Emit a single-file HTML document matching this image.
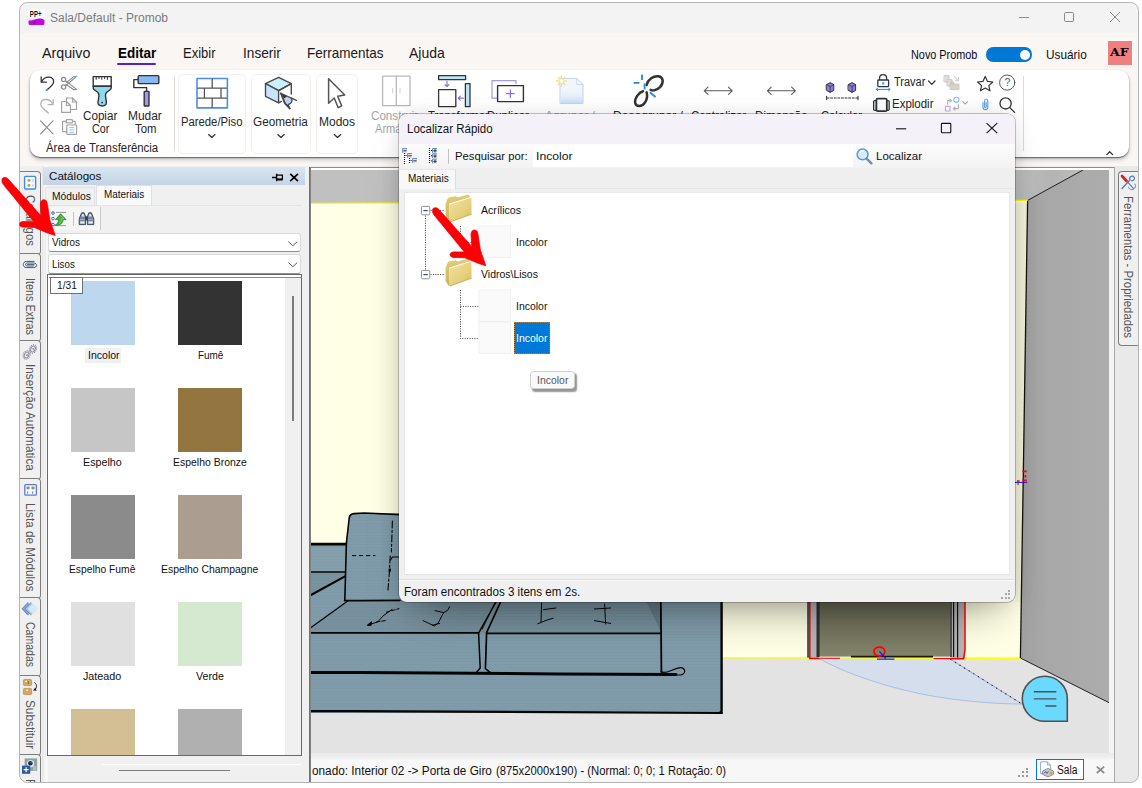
<!DOCTYPE html>
<html lang="pt-BR">
<head>
<meta charset="utf-8">
<title>Sala/Default - Promob</title>
<style>
html,body{margin:0;padding:0;background:#fff;}
body{width:1142px;height:788px;position:relative;overflow:hidden;font-family:"Liberation Sans",sans-serif;color:#000;}
.a{position:absolute;}
.t{position:absolute;white-space:nowrap;line-height:1;}
#win{left:0;top:0;width:1142px;height:788px;clip-path:inset(2.5px 3.5px 5.5px 19.5px round 8px);}
#winb{left:19px;top:2px;width:1120px;height:781px;border:1px solid #b4b4b4;border-radius:8.5px;box-sizing:border-box;pointer-events:none;}
</style>
</head>
<body>
<div id="win" class="a">
<div class="a" style="left:19px;top:2px;width:1120px;height:31px;background:#f3f3f3"></div>
<svg class="a" style="left:28px;top:9px" width="17" height="17" viewBox="0 0 17 17">
<rect x="0" y="0" width="17" height="17" rx="2" fill="#fff"/>
<path d="M0.5 11.5 Q4 11.5 6.5 10.5 Q10 9 13 9.5 Q15.5 10 16.5 11 V14.5 Q16.5 16 15 16 H2 Q0.5 16 0.5 14.5 Z" fill="#c20ae0"/>
<path d="M4.5 13.5 L8 11 L7.5 15.5 Z" fill="#8a069e" opacity=".7"/>
<text x="1.8" y="8" font-family="Liberation Sans, sans-serif" font-weight="700" font-size="8.4" textLength="11.8" lengthAdjust="spacingAndGlyphs" fill="#111">PP+</text>
</svg>
<span class="t" style="left:50.00px;top:12.00px;font-size:12.5px;transform-origin:0 0;transform:scaleX(0.9595);color:#7b7b7b;">Sala/Default - Promob</span>
<svg class="a" style="left:1010px;top:5px" width="120" height="26" viewBox="0 0 120 26" fill="none" stroke="#8a8a8a" stroke-width="1">
<path d="M9 12.5 H19"/>
<rect x="54.5" y="7.5" width="9" height="9" rx="1.3"/>
<path d="M100 7 L110 17 M110 7 L100 17"/>
</svg>
<div class="a" style="left:19px;top:33px;width:1120px;height:133px;background:#f9f6f3"></div>
<span class="t" style="left:42.30px;top:46.00px;font-size:14.5px;transform-origin:0 0;transform:scaleX(0.9824);color:#1a1a1a;">Arquivo</span>
<span class="t" style="left:117.60px;top:46.00px;font-size:14.5px;transform-origin:0 0;transform:scaleX(0.9296);font-weight:700;color:#000;">Editar</span>
<div class="a" style="left:117px;top:63px;width:39px;height:2px;background:#4a22d8;border-radius:1px"></div>
<span class="t" style="left:183.00px;top:46.00px;font-size:14.5px;transform-origin:0 0;transform:scaleX(0.8991);color:#1a1a1a;">Exibir</span>
<span class="t" style="left:242.60px;top:46.00px;font-size:14.5px;transform-origin:0 0;transform:scaleX(0.9408);color:#1a1a1a;">Inserir</span>
<span class="t" style="left:306.60px;top:46.00px;font-size:14.5px;transform-origin:0 0;transform:scaleX(0.9295);color:#1a1a1a;">Ferramentas</span>
<span class="t" style="left:409.20px;top:46.00px;font-size:14.5px;transform-origin:0 0;transform:scaleX(0.9653);color:#1a1a1a;">Ajuda</span>
<span class="t" style="left:910.60px;top:49.00px;font-size:12px;transform-origin:0 0;transform:scaleX(0.9051);color:#0a0a2a;">Novo Promob</span>
<div class="a" style="left:985.5px;top:47.3px;width:46px;height:14.4px;border-radius:7.2px;background:#0078d7"></div>
<div class="a" style="left:1019.5px;top:49.6px;width:10px;height:10px;border-radius:5px;background:#fff"></div>
<span class="t" style="left:1045.80px;top:48.00px;font-size:13px;transform-origin:0 0;transform:scaleX(0.9086);color:#111;">Usuário</span>
<div class="a" style="left:1108px;top:41px;width:24px;height:24px;background:#f08080;box-shadow:0 0 0 1px #fffdfb"></div>
<span class="t" style="left:1110.40px;top:47.00px;font-size:11px;transform-origin:0 0;transform:scaleX(1.1380);font-weight:700;font-family:'DejaVu Serif',serif;color:#000;">AF</span>
<div class="a" style="left:29.5px;top:69.5px;width:1099.2px;height:87.3px;background:#fff;border-radius:10px;box-shadow:0 1px 1.5px rgba(0,0,0,.55),0 3px 4px rgba(0,0,0,.18)"></div>
<div class="a" style="left:178px;top:73.5px;width:67.75px;height:80px;border:1px solid #f4efec;border-radius:5px;box-sizing:border-box"></div>
<div class="a" style="left:250.5px;top:73.5px;width:60.25px;height:80px;border:1px solid #f4efec;border-radius:5px;box-sizing:border-box"></div>
<div class="a" style="left:315.75px;top:73.5px;width:42.25px;height:80px;border:1px solid #f4efec;border-radius:5px;box-sizing:border-box"></div>
<div class="a" style="left:173.5px;top:76px;width:1px;height:75px;background:#e3d8d3"></div>
<div class="a" style="left:1023px;top:76px;width:1px;height:75px;background:#e3d8d3"></div>
<span class="t" style="left:83.20px;top:110.00px;font-size:12px;transform-origin:0 0;transform:scaleX(0.9703);color:#262626;">Copiar</span>
<span class="t" style="left:92.20px;top:123.00px;font-size:12px;transform-origin:0 0;transform:scaleX(0.8947);color:#262626;">Cor</span>
<span class="t" style="left:128.20px;top:110.00px;font-size:12px;transform-origin:0 0;transform:scaleX(0.9937);color:#262626;">Mudar</span>
<span class="t" style="left:134.60px;top:123.00px;font-size:12px;transform-origin:0 0;transform:scaleX(0.9440);color:#262626;">Tom</span>
<span class="t" style="left:45.80px;top:142.00px;font-size:12px;transform-origin:0 0;transform:scaleX(0.9503);color:#262626;">Área de Transferência</span>
<span class="t" style="left:181.00px;top:116.00px;font-size:12.5px;transform-origin:0 0;transform:scaleX(0.9031);color:#262626;">Parede/Piso</span>
<span class="t" style="left:253.20px;top:116.00px;font-size:12.5px;transform-origin:0 0;transform:scaleX(0.9391);color:#262626;">Geometria</span>
<span class="t" style="left:319.00px;top:116.00px;font-size:12.5px;transform-origin:0 0;transform:scaleX(0.9595);color:#262626;">Modos</span>
<span class="t" style="left:370.80px;top:110.00px;font-size:12px;transform-origin:0 0;transform:scaleX(0.9696);color:#a6a6a6;">Construir</span>
<span class="t" style="left:375.20px;top:123.00px;font-size:12px;transform-origin:0 0;transform:scaleX(0.9237);color:#a6a6a6;">Armário</span>
<span class="t" style="left:428.00px;top:110.00px;font-size:12px;transform-origin:0 0;transform:scaleX(0.9399);color:#262626;">Transformar</span>
<span class="t" style="left:487.20px;top:110.00px;font-size:12px;transform-origin:0 0;transform:scaleX(0.9497);color:#262626;">Duplicar</span>
<span class="t" style="left:545.00px;top:110.00px;font-size:12px;transform-origin:0 0;transform:scaleX(1.0130);color:#a6a6a6;">Agrupar /</span>
<span class="t" style="left:612.60px;top:110.00px;font-size:12px;transform-origin:0 0;transform:scaleX(1.0076);color:#262626;">Desagrupar /</span>
<span class="t" style="left:691.00px;top:110.00px;font-size:12px;transform-origin:0 0;transform:scaleX(0.9479);color:#262626;">Centralizar</span>
<span class="t" style="left:754.60px;top:110.00px;font-size:12px;transform-origin:0 0;transform:scaleX(0.9699);color:#262626;">Dimensão</span>
<span class="t" style="left:821.00px;top:110.00px;font-size:12px;transform-origin:0 0;transform:scaleX(0.9315);color:#262626;">Calcular</span>
<span class="t" style="left:893.60px;top:76.00px;font-size:12.5px;transform-origin:0 0;transform:scaleX(0.8808);color:#262626;">Travar</span>
<span class="t" style="left:892.30px;top:98.00px;font-size:12.5px;transform-origin:0 0;transform:scaleX(0.9189);color:#262626;">Explodir</span>
<svg class="a" style="left:0;top:0" width="1142" height="170" viewBox="0 0 1142 170" fill="none" stroke-linecap="round" stroke-linejoin="round">
<defs><linearGradient id="gdoc" x1="0" x2="0" y1="0" y2="1"><stop offset="0" stop-color="#e4f0fb" stop-opacity="0"/><stop offset="1" stop-color="#c4dcf6"/></linearGradient></defs>
<!-- undo -->
<g stroke="#333" stroke-width="1.3">
<path d="M41.2 77 V82.2 H46.4"/><path d="M41.8 81.6 C44.5 75.5 53.6 75.6 53.6 81.8 C53.6 85.2 50 87 46.6 90.2"/>
</g><path d="M47.6 89.2 L46.2 90.6" stroke="#3a8ee6" stroke-width="1.4"/>
<!-- redo gray -->
<g stroke="#b4b4b4" stroke-width="1.3">
<path d="M53.2 99.4 V104.6 H48"/><path d="M52.6 104 C50 97.9 40.8 98 40.8 104.2 C40.8 107.6 44.4 109.4 47.8 112.6"/>
</g><path d="M46.8 111.6 L48.2 113" stroke="#9cc4ee" stroke-width="1.4"/>
<!-- scissors -->
<g stroke="#8c8c8c" stroke-width="1.2">
<circle cx="63.6" cy="79.4" r="2.1"/><circle cx="63.6" cy="87" r="2.1"/>
<path d="M65.4 80.6 L76.6 89.4 L73.5 89.6 L66 84.5"/><path d="M65.4 85.8 L76.8 76.4 L73.8 76.6 L66.6 82.4"/>
</g><path d="M74.6 76.8 L76.6 76.4" stroke="#7ab4ee" stroke-width="1.2"/>
<!-- copy -->
<g stroke="#a3a3a3" stroke-width="1.2">
<path d="M66.5 100.5 V98 H72.5 L76.5 102 V109.5 H70.5"/><path d="M72.5 98 V102 H76.5"/>
<path d="M61.6 101.5 H66.5 L70.5 105.5 V112.4 H61.6 Z"/><path d="M66.5 101.5 V105.5 H70.5"/>
</g>
<!-- delete x -->
<path d="M40.6 120.8 L53 133.8 M53 120.8 L40.6 133.8" stroke="#8c8c8c" stroke-width="1.2"/>
<!-- paste -->
<g stroke="#a3a3a3" stroke-width="1.2">
<path d="M66 121.4 H62.6 V131.6 H66.6"/><path d="M73 121.4 H75.2 V124.4"/>
<rect x="66.4" y="119.6" width="6" height="3.2" rx="0.6"/>
<rect x="66.8" y="125" width="9.8" height="9.4" rx="0.6"/>
</g>
<path d="M69.4 127.5 H74 M69.4 129.9 H74 M69.4 132.3 H74" stroke="#8cbcf0" stroke-width=".9" stroke-linecap="butt"/>
<!-- brush -->
<g stroke="#333" stroke-width="1.4">
<path d="M93.2 76.6 H111.2 V86.2 H93.2 Z" fill="#fff"/>
<path d="M93.2 86.2 H111.2 V88.2 C111.2 90.5 106.3 91 105.6 94 C105 97 106.4 100 106.4 102.6 C106.4 104.6 104.6 106 102.2 106 C99.8 106 98 104.6 98 102.6 C98 100 99.4 97 98.8 94 C98.1 91 93.2 90.5 93.2 88.2 Z" fill="#8fd9f2"/>
</g>
<path d="M96.2 76.8 V79.4 M99 76.8 V78.6 M101.8 76.8 V79.4 M104.6 76.8 V78.6 M107.4 76.8 V79.4" stroke="#333" stroke-width="1"/>
<circle cx="102.2" cy="102.6" r="0.9" fill="#333"/>
<!-- roller -->
<g stroke="#333" stroke-width="1.4">
<rect x="138.2" y="75.6" width="20.6" height="8" rx="0.8" fill="#8ab8f2"/>
<path d="M138.2 79.6 H133.8 V87.6 H146.6 V91.4"/>
<rect x="144.2" y="91.4" width="4.8" height="14.6" rx="0.6" fill="#a896ea"/>
</g>
<!-- wall -->
<rect x="197" y="78.5" width="30.4" height="29.4" fill="#fff" stroke="#4a90e2" stroke-width="1.6"/>
<g stroke="#555" stroke-width="1.3">
<path d="M197.8 88.2 H226.6 M197.8 98.2 H226.6 M212.2 79.2 V88.2 M204.4 88.2 V98.2 M221 88.2 V98.2 M212.2 98.2 V107.2"/>
</g>
<!-- geometry cube -->
<g stroke="#4a4a4a" stroke-width="1.4">
<path d="M265.5 83.6 L278.6 77.4 L291.3 83.6 L278.6 90.6 Z" fill="#c8f0ff"/>
<path d="M265.5 83.6 L278.6 90.6 V102.8 L265.5 96.3 Z" fill="#c8e4fc"/>
<path d="M278.6 90.6 L291.3 83.6 V94" fill="none"/><path d="M278.6 102.8 L281.4 101.4"/>
<path d="M280.8 93.2 L296.4 100.4 L290.6 97.6 C293 100 292 104 288 104.6 L290 108.4 L285.4 103.6 Z" fill="#b8d4f8" stroke-width="1.2"/>
<path d="M280.8 93.2 L284.8 103.4 L289.8 108.6" stroke-width="1.6"/>
<path d="M281.4 93.4 L287 96.4 L284 98.4 Z" fill="#333" stroke="none"/>
</g>
<!-- cursor -->
<path d="M328.6 78.8 V103.3 L334.2 98 L338.2 107.7 L341.7 105.9 L337.7 96.3 L344.8 95 Z" stroke="#555" stroke-width="1.5" fill="#fff"/>
<!-- cabinet gray -->
<g stroke="#b9b9b9" stroke-width="1.3">
<rect x="382.6" y="76.2" width="27.4" height="29.4" fill="#fff"/><path d="M396.3 76.2 V105.6"/>
</g>
<path d="M392.6 88.6 V92.8 M400 88.6 V92.8" stroke="#d9d0f6" stroke-width="1.2"/>
<!-- transform -->
<g stroke="#333" stroke-width="1.3">
<rect x="438.6" y="75.6" width="27" height="4" fill="#bfe6f5"/>
<rect x="465.4" y="83.6" width="4.6" height="23" fill="#bfe6f5"/>
<rect x="438.6" y="89.6" width="17.2" height="17" fill="#fff"/>
</g>
<g stroke="#8b6be8" stroke-width="1.2"><path d="M447 81.4 V86.4 M445 84.6 L447 86.6 L449 84.6"/><path d="M463.4 98.2 H458.4 M460.2 96.2 L458.2 98.2 L460.2 100.2"/></g>
<!-- duplicate -->
<path d="M499 98.2 H492 V80.6 H516 V83.6" stroke="#a896ea" stroke-width="1.2"/>
<rect x="497.6" y="85.6" width="25.8" height="16" stroke="#333" stroke-width="1.4" fill="#fff"/>
<path d="M506.6 93.6 H514.2 M510.4 89.8 V97.4" stroke="#8b6be8" stroke-width="1.2"/>
<!-- new doc -->
<path d="M560.4 78.4 H576.8 L583 84.6 V103.6 H560.4 Z" fill="#f0f6fd" stroke="#bdd0ec" stroke-width="1"/>
<path d="M576.8 78.4 V84.6 H583" stroke="#c8d7ee" stroke-width="1"/>
<path d="M561 90 H582.4 V103 H561 Z" fill="url(#gdoc)" stroke="none"/>
<g stroke="#f3e07a" stroke-width="1.4"><path d="M561.4 76 V86 M556.4 81 H566.4 M558 77.6 L564.8 84.4 M564.8 77.6 L558 84.4"/></g>
<circle cx="561.4" cy="81" r="2" fill="#fffbe0"/>
<!-- link -->
<g stroke="#333" stroke-width="2.5">
<path d="M646.6 85 C648 79.6 653.4 75.6 658.4 76.2 C663.6 77 664 83 660 87.2 C657 90.2 653 91 650.6 89.8"/>
<path d="M643 91.2 C638.6 92.4 634.4 98.6 635.2 102.8 C636.2 107.4 641.8 107 644.8 102.8 C647 99.6 647.6 95.6 646.6 92.4"/>
</g>
<g stroke="#1e88e5" stroke-width="1.8" stroke-linecap="butt"><path d="M642 74.6 V80 M633.6 82.8 H639.4 M644.6 83.4 V89.4 M649.8 92.2 L655.6 97"/></g>
<!-- arrows -->
<g stroke="#5a5a5a" stroke-width="1.1">
<path d="M704.4 90.8 H732 M708 87.2 L704.2 90.8 L708 94.4 M728.4 87.2 L732.2 90.8 L728.4 94.4"/>
<path d="M767.6 90.8 H795.2 M771.2 87.2 L767.4 90.8 L771.2 94.4 M791.6 87.2 L795.4 90.8 L791.6 94.4"/>
</g>
<!-- calc cubes -->
<g stroke="#333" stroke-width="1">
<path d="M826.6 84.6 L830.2 82.6 L833.8 84.6 V90.4 L830.2 92.4 L826.6 90.4 Z" fill="#8f7be6"/>
<path d="M830.2 86.6 V92.4 M826.6 84.6 L830.2 86.6 L833.8 84.6" stroke-width=".8"/>
<path d="M848.4 84.6 L852 82.6 L855.6 84.6 V90.4 L852 92.4 L848.4 90.4 Z" fill="#8f7be6"/>
<path d="M852 86.6 V92.4 M848.4 84.6 L852 86.6 L855.6 84.6" stroke-width=".8"/>
<path d="M826.6 96.2 V99.8 M858 96.2 V99.8"/>
<path d="M827 98 H858" stroke-dasharray="2 1.6"/>
</g>
<!-- lock -->
<g stroke="#333" stroke-width="1.3">
<path d="M879.6 80 V77.8 C879.6 73.6 886.6 73.6 886.6 77.8 V80"/>
<rect x="877.8" y="80" width="10.8" height="6.6" rx="0.8" fill="#fff"/>
</g>
<rect x="882.2" y="82" width="2" height="2.6" fill="#29b6f6"/>
<path d="M876.2 89.4 H890 M877.6 88.2 L876.2 89.4 L877.6 90.6 M888.6 88.2 L890 89.4 L888.6 90.6" stroke="#1e88e5" stroke-width="1"/>
<!-- travar chevron -->
<path d="M928.6 81 L931.8 84.4 L935 81" stroke="#333" stroke-width="1.2"/>
<!-- explodir icon -->
<rect x="873.6" y="100.6" width="15.6" height="9.8" rx="1.2" fill="#cfe0f2" stroke="#333" stroke-width="1.2"/>
<rect x="876.4" y="98.6" width="10.4" height="12.6" rx="1.4" fill="#fff" stroke="#333" stroke-width="1.8"/>
<!-- disabled icons -->
<g stroke="#c9c9c9" stroke-width="1">
<rect x="944.4" y="75.6" width="4.6" height="6.4" fill="#e2ddd6"/><rect x="947.4" y="79.6" width="4.6" height="6.4" fill="#e2ddd6"/>
<rect x="950.4" y="84" width="8.6" height="5.6" fill="#d8d2c8"/><path d="M954 76.4 L958.4 80.6 M958.6 77.4 V80.8 H955.2"/>
<rect x="950.8" y="82" width="3" height="2.4" fill="#d8c9a8"/>
</g>
<g stroke="#b9b9b9" stroke-width="1.1">
<path d="M947.6 104.2 V100.6 H951.2 M949.8 99 L951.6 100.6 L949.8 102.2"/>
<path d="M958.4 104.6 V108.6 H953.4 M955 107 L953.2 108.6 L955 110.2"/>
</g>
<circle cx="956.4" cy="99.8" r="2.6" stroke="#8ab8f2" stroke-width="1.1"/>
<rect x="945.4" y="106.4" width="4.6" height="4.6" stroke="#c4b5f0" stroke-width="1.1"/>
<path d="M962.8 101.6 L965.2 104 L967.6 101.6" stroke="#b0b0b0" stroke-width="1.1"/>
<!-- star -->
<path d="M985.2 76.4 L987.5 81.4 L992.8 82 L988.8 85.6 L990 90.8 L985.2 88.1 L980.4 90.8 L981.6 85.6 L977.6 82 L982.9 81.4 Z" stroke="#333" stroke-width="1.2"/>
<!-- help -->
<circle cx="1007.2" cy="82.6" r="7.6" stroke="#555" stroke-width="1"/>
<!-- paperclip -->
<path d="M983 102.6 V107.2 C983 110.4 987.8 110.4 987.8 107.2 V101 C987.8 98.4 984.6 98.4 984.6 101 V106.8 C984.6 108 986.2 108 986.2 106.8 V102.6" stroke="#5a9be8" stroke-width="1.1"/>
<!-- magnifier -->
<circle cx="1005.6" cy="103.4" r="5.6" stroke="#333" stroke-width="1.3"/><path d="M1009.8 107.6 L1014.6 112.4" stroke="#333" stroke-width="1.3"/>
<!-- dropdown chevrons -->
<g stroke="#333" stroke-width="1.3"><path d="M208.6 134.6 L211.8 137.4 L215 134.6"/><path d="M277.8 134.6 L281 137.4 L284.2 134.6"/><path d="M334.3 134.6 L337.5 137.4 L340.7 134.6"/></g>
<!-- collapse caret -->
<path d="M1106.8 154.6 L1109.7 151.8 L1112.6 154.6" stroke="#333" stroke-width="1.3"/>
</svg>
<span class="t" style="left:1004.60px;top:77.00px;font-size:10.5px;color:#555;">?</span>
<div class="a" style="left:19px;top:166px;width:1120px;height:617px;background:#f0f0f0"></div>
<div class="a" style="left:19px;top:170.7px;width:21px;height:82.1px;border:1px solid #7d7d7d;border-left:none;border-radius:0 4px 4px 0;background:#f0f0f0"></div>
<div class="a" style="left:19px;top:252.8px;width:21px;height:87.2px;border:1px solid #7d7d7d;border-left:none;border-radius:0 4px 4px 0;background:#f0f0f0"></div>
<div class="a" style="left:19px;top:340.0px;width:21px;height:137.9px;border:1px solid #7d7d7d;border-left:none;border-radius:0 4px 4px 0;background:#f0f0f0"></div>
<div class="a" style="left:19px;top:477.9px;width:21px;height:119.1px;border:1px solid #7d7d7d;border-left:none;border-radius:0 4px 4px 0;background:#f0f0f0"></div>
<div class="a" style="left:19px;top:597.0px;width:21px;height:78.0px;border:1px solid #7d7d7d;border-left:none;border-radius:0 4px 4px 0;background:#f0f0f0"></div>
<div class="a" style="left:19px;top:675.0px;width:21px;height:78.5px;border:1px solid #7d7d7d;border-left:none;border-radius:0 4px 4px 0;background:#f0f0f0"></div>
<div class="a" style="left:19px;top:753.5px;width:21px;height:46.0px;border:1px solid #7d7d7d;border-left:none;border-radius:0 4px 4px 0;background:#f0f0f0"></div>
<div class="a" style="left:41.5px;top:166px;width:6px;height:617px;background:linear-gradient(90deg,#e6e6e6,#fbfbfb 70%,#f4f4f4)"></div>
<span class="t" style="left:36.06px;top:195.20px;font-size:12px;color:#565656;transform-origin:0 0;transform:rotate(90deg) scaleX(0.9401);">Catálogos</span>
<span class="t" style="left:36.06px;top:278.00px;font-size:12px;color:#565656;transform-origin:0 0;transform:rotate(90deg) scaleX(0.8997);">Itens Extras</span>
<span class="t" style="left:36.06px;top:364.00px;font-size:12px;color:#565656;transform-origin:0 0;transform:rotate(90deg) scaleX(0.9832);">Inserção Automática</span>
<span class="t" style="left:36.06px;top:502.50px;font-size:12px;color:#565656;transform-origin:0 0;transform:rotate(90deg) scaleX(0.9755);">Lista de Módulos</span>
<span class="t" style="left:36.06px;top:621.80px;font-size:12px;color:#565656;transform-origin:0 0;transform:rotate(90deg) scaleX(0.8762);">Camadas</span>
<span class="t" style="left:36.06px;top:699.80px;font-size:12px;color:#565656;transform-origin:0 0;transform:rotate(90deg) scaleX(0.9836);">Substituir</span>
<span class="t" style="left:36.06px;top:778.60px;font-size:12px;color:#565656;transform-origin:0 0;transform:rotate(90deg) scaleX(1.0000);">Ferragens</span>
<svg class="a" style="left:0;top:160px" width="60" height="628" viewBox="0 160 60 628" fill="none">
<!-- catalog icon -->
<rect x="24.6" y="176.4" width="11" height="12.6" rx="1" fill="#fdfdfd" stroke="#3a8ee6" stroke-width="1.4"/>
<ellipse cx="29" cy="180.4" rx="1.6" ry="1.3" fill="#b89a6a"/><ellipse cx="29" cy="185.4" rx="1.6" ry="1.3" fill="#b89a6a"/>
<path d="M33 179.5 V181.5 M33 184.5 V186.5" stroke="#7ab4ee" stroke-width="1"/>
<!-- paperclip -->
<path d="M34 261.4 H26.4 C22.2 261.4 22.2 267.6 26.4 267.6 H33.6 C37.6 267.6 37.6 263 33.6 263 H27.2 C25 263 25 266 27.2 266 H33.8" stroke="#2d4a6e" stroke-width=".9" stroke-linecap="round"/>
<path d="M27.4 264.5 H34" stroke="#2d4a6e" stroke-width=".8" stroke-linecap="round"/>
<!-- gears -->
<g stroke="#8c8ca2" stroke-width="1" stroke-dasharray="1.1 0.9">
<ellipse cx="33" cy="349" rx="3.4" ry="4.4" transform="rotate(25 33 349)"/><ellipse cx="26.6" cy="355" rx="3.4" ry="4.4" transform="rotate(25 26.6 355)"/></g>
<g stroke="#8c8ca2" stroke-width="1"><ellipse cx="33" cy="349" rx="2.2" ry="3.1" transform="rotate(25 33 349)"/><ellipse cx="26.6" cy="355" rx="2.2" ry="3.1" transform="rotate(25 26.6 355)"/>
<circle cx="33.4" cy="349" r=".7"/><circle cx="27" cy="355" r=".7"/></g>
<!-- module list -->
<rect x="24.8" y="484.6" width="11.6" height="10.6" rx="1" fill="#eef6ff" stroke="#5a7ccc" stroke-width="1.3"/>
<ellipse cx="28" cy="488" rx="1.7" ry="1.4" fill="#a08a5a"/><ellipse cx="33" cy="488" rx="1.7" ry="1.4" fill="#a08a5a"/>
<path d="M27.6 491.4 V493.8 M32.6 491.4 V493.8" stroke="#5a8ad8" stroke-width="1"/>
<!-- layers -->
<g fill="#7a9ad0"><path d="M22 608.8 L28 602.4 L34 608.8 L28 615.2 Z" opacity=".9"/></g>
<path d="M25 608.8 L31 602.4 L37 608.8 L31 615.2 Z" fill="#a8c4e6"/>
<path d="M28 608.8 L33 603.2 L38 608.8 L33 614.4 Z" fill="#d8e8f4"/>
<path d="M22 608.8 L28 602.4 M25 608.8 L31 602.4 M22 608.8 L28 615.2 M25 608.8 L31 615.2" stroke="#5a7ab8" stroke-width=".8"/>
<!-- substituir -->
<rect x="23.4" y="679.4" width="8.2" height="6.2" rx="1.2" fill="#d2a868" stroke="#b08848" stroke-width=".7"/>
<rect x="23.4" y="688.4" width="8.2" height="6.2" rx="1.2" fill="#d2a868" stroke="#b08848" stroke-width=".7"/>
<rect x="25.4" y="680.8" width="1.6" height="1.2" fill="#fff"/><rect x="26.4" y="689.6" width="1.6" height="1.2" fill="#fff"/><rect x="27.6" y="681" width="1.4" height="3" fill="#a07830"/>
<path d="M34.4 682.4 C37.4 684.8 37 688 34.6 690" stroke="#222" stroke-width="1"/><path d="M33 690.6 L36.6 690.8 L35.4 687.6 Z" fill="#222"/>
<!-- last -->
<rect x="24.6" y="758.4" width="12.6" height="12.6" fill="#8fa3a3"/><rect x="33" y="766" width="3.4" height="5" fill="#b0bcbc"/>
<circle cx="30.6" cy="763.6" r="3.6" fill="#dfe8ee"/><circle cx="30.4" cy="763.2" r="2.3" fill="#1c2c4c"/><circle cx="31.2" cy="762.6" r=".7" fill="#3a8ee6"/>
<rect x="22" y="765.6" width="8.2" height="8.2" fill="#2a5c9a"/><path d="M26.1 767.2 V772.2 M23.6 769.7 H28.6" stroke="#fff" stroke-width="1.2"/>
</svg>
<div class="a" style="left:42.8px;top:167.2px;width:262.4px;height:17.8px;background:linear-gradient(180deg,#d9e5f1,#c4d4e5)"></div>
<span class="t" style="left:49.40px;top:171.00px;font-size:11.8px;transform-origin:0 0;transform:scaleX(0.9862);color:#111;">Catálogos</span>
<svg class="a" style="left:269px;top:170px" width="34" height="14" viewBox="270 170 34 14" fill="none" stroke="#000">
<path d="M273 177.5 H277.4" stroke-width="1.4"/><path d="M277.6 173.8 V181.2" stroke-width="1.4"/><path d="M277.6 175.2 H283.4 V179.2 H277.6" stroke-width="1.2"/><path d="M277.6 179.6 H283.6" stroke-width="1.6"/>
<path d="M291.2 173.8 L299 181.2 M299 173.8 L291.2 181.2" stroke-width="1.7"/>
</svg>
<div class="a" style="left:45.3px;top:187.4px;width:50px;height:18px;border:1px solid #e2e2e2;border-bottom:none;box-sizing:border-box;background:#f0f0f0"></div>
<div class="a" style="left:95.6px;top:185.4px;width:56.6px;height:20.4px;border:1px solid #e0e0e0;border-bottom:none;box-sizing:border-box;background:#f9f9f9"></div>
<span class="t" style="left:51.60px;top:191.00px;font-size:11.5px;transform-origin:0 0;transform:scaleX(0.8926);color:#111;">Módulos</span>
<span class="t" style="left:103.90px;top:189.00px;font-size:11.5px;transform-origin:0 0;transform:scaleX(0.8638);color:#111;">Materiais</span>
<div class="a" style="left:45.3px;top:205.4px;width:257px;height:552px;border-top:1px solid #e4e4e4;border-left:1px solid #e8e8e8;box-sizing:border-box"></div>
<div class="a" style="left:46px;top:207.4px;width:55.4px;height:23px;background:#f6f6f6;border-right:1px solid #c9c9c9;box-sizing:border-box"></div>
<div class="a" style="left:73px;top:212px;width:1px;height:14px;background:#c4c4c4"></div>
<svg class="a" style="left:48px;top:208px" width="50" height="22" viewBox="48 208 50 22" fill="none">
<path d="M56 212.4 H66 M56 225.6 H66" stroke="#9a9a9a" stroke-width="1"/>
<circle cx="53" cy="213" r="1.3" stroke="#1e6cc0" stroke-width="1" fill="#fff"/><circle cx="53" cy="218.6" r="1.3" stroke="#1e6cc0" stroke-width="1" fill="#fff"/><circle cx="53" cy="224.6" r="1.3" stroke="#1e6cc0" stroke-width="1" fill="#fff"/>
<path d="M60.6 213.8 L66 219.6 H63 C63.2 223.4 60 225.6 54.6 225.4 C57.8 224.2 58.6 222 58.4 219.6 H55.4 Z" fill="#4cac3e" stroke="#2c7c26" stroke-width=".8"/>
<path d="M60.6 215.4 L63.8 218.8 H61.6 C61.6 221 60.6 222.6 59.4 223.4" stroke="#8fd67e" stroke-width=".8" fill="none"/>
<!-- binoculars -->
<g fill="#76869c" stroke="#34425a" stroke-width=".9">
<path d="M81.6 212.8 H84.2 L85.6 216.6 V224.6 H79.2 V218.8 Z"/><path d="M88.8 212.8 H91.4 L93.8 218.8 V224.6 H87.4 V216.6 Z"/>
<rect x="85.6" y="216.8" width="1.8" height="3.2" fill="#34425a"/>
</g>
<path d="M82.2 214 H83.6 L84.4 216.6 H81.4 Z M89.4 214 H90.8 L91.8 216.6 H88.6 Z" fill="#dfe6f0"/>
<rect x="80.2" y="221.4" width="4.4" height="2.2" fill="#e8edf4"/><rect x="88.4" y="221.4" width="4.4" height="2.2" fill="#e8edf4"/>
<path d="M80 219.6 H85 M88 219.6 H93" stroke="#aab6c6" stroke-width=".8"/>
</svg>
<div class="a" style="left:47.6px;top:232.6px;width:253.6px;height:19.4px;background:#fff;border:1px solid #d9d9d9;border-bottom-color:#8f8f8f;border-radius:3px;box-sizing:border-box"></div>
<span class="t" style="left:51.50px;top:237.00px;font-size:11.5px;transform-origin:0 0;transform:scaleX(0.8645);color:#111;">Vidros</span>
<svg class="a" style="left:286px;top:239.6px" width="14" height="8" viewBox="0 0 14 8" fill="none"><path d="M2.4 1.6 L6.8 5.8 L11.2 1.6" stroke="#555" stroke-width="1"/></svg>
<div class="a" style="left:47.6px;top:254.2px;width:253.6px;height:19.4px;background:#fff;border:1px solid #d9d9d9;border-bottom-color:#8f8f8f;border-radius:3px;box-sizing:border-box"></div>
<span class="t" style="left:51.50px;top:259.00px;font-size:11.5px;transform-origin:0 0;transform:scaleX(0.8493);color:#111;">Lisos</span>
<svg class="a" style="left:286px;top:261.2px" width="14" height="8" viewBox="0 0 14 8" fill="none"><path d="M2.4 1.6 L6.8 5.8 L11.2 1.6" stroke="#555" stroke-width="1"/></svg>
<div class="a" style="left:47.2px;top:274px;width:254.4px;height:482.2px;background:#fff;border:1.6px solid #686868;border-right-width:1px;border-bottom-width:1.2px;box-sizing:border-box"></div>
<div class="a" style="left:49px;top:276.6px;width:252px;height:1px;background:#8a8a8a"></div>
<div class="a" style="left:284.6px;top:277.6px;width:16px;height:477.4px;background:#f0f0f0"></div>
<div class="a" style="left:291.8px;top:296px;width:2px;height:125.4px;background:#7c7c7c"></div>
<div class="a" style="left:71.2px;top:281.2px;width:63.8px;height:64px;background:#bdd7ee"></div>
<div class="a" style="left:178.3px;top:281.2px;width:64px;height:64px;background:#333333"></div>
<div class="a" style="left:71.2px;top:388.2px;width:63.8px;height:64px;background:#c6c6c6"></div>
<div class="a" style="left:178.3px;top:388.2px;width:64px;height:64px;background:#937540"></div>
<div class="a" style="left:71.2px;top:495.2px;width:63.8px;height:64px;background:#8b8b8b"></div>
<div class="a" style="left:178.3px;top:495.2px;width:64px;height:64px;background:#ab9e91"></div>
<div class="a" style="left:71.2px;top:602.2px;width:63.8px;height:64px;background:#e0e0e0"></div>
<div class="a" style="left:178.3px;top:602.2px;width:64px;height:64px;background:#d5e8d0"></div>
<div class="a" style="left:71.2px;top:709.2px;width:63.8px;height:45.8px;background:#d4bf94"></div>
<div class="a" style="left:178.3px;top:709.2px;width:64px;height:45.8px;background:#b0b0b0"></div>
<div class="a" style="left:50.2px;top:277.4px;width:32.4px;height:16.6px;background:#fff;border:1px solid #707070;box-sizing:border-box"></div>
<span class="t" style="left:57.20px;top:280.00px;font-size:11.5px;transform-origin:0 0;transform:scaleX(0.8846);color:#111;">1/31</span>
<div class="a" style="left:85px;top:348px;width:36.4px;height:15px;background:#f0f0f0"></div>
<span class="t" style="left:87.60px;top:350.00px;font-size:11.5px;transform-origin:0 0;transform:scaleX(0.9155);color:#111;">Incolor</span>
<span class="t" style="left:197.60px;top:350.00px;font-size:11.5px;transform-origin:0 0;transform:scaleX(0.8641);color:#111;">Fumê</span>
<span class="t" style="left:83.20px;top:457.00px;font-size:11.5px;transform-origin:0 0;transform:scaleX(0.9336);color:#111;">Espelho</span>
<span class="t" style="left:173.20px;top:457.00px;font-size:11.5px;transform-origin:0 0;transform:scaleX(0.9090);color:#111;">Espelho Bronze</span>
<span class="t" style="left:69.00px;top:564.00px;font-size:11.5px;transform-origin:0 0;transform:scaleX(0.8955);color:#111;">Espelho Fumê</span>
<span class="t" style="left:161.40px;top:564.00px;font-size:11.5px;transform-origin:0 0;transform:scaleX(0.9050);color:#111;">Espelho Champagne</span>
<span class="t" style="left:83.20px;top:671.00px;font-size:11.5px;transform-origin:0 0;transform:scaleX(0.9334);color:#111;">Jateado</span>
<span class="t" style="left:196.00px;top:671.00px;font-size:11.5px;transform-origin:0 0;transform:scaleX(0.9317);color:#111;">Verde</span>
<div class="a" style="left:102px;top:764px;width:199.4px;height:1px;background:#fdfdfd"></div>
<div class="a" style="left:119.2px;top:770px;width:110.4px;height:1.2px;background:#7c7c7c"></div>
<div class="a" style="left:309px;top:167px;width:805px;height:616px;background:#fff"></div>
<div class="a" style="left:309px;top:167px;width:805px;height:1px;background:#8d8d8d"></div>
<div class="a" style="left:309.2px;top:167px;width:1.8px;height:616px;background:linear-gradient(90deg,#6a6a6a,#8a8a8a)"></div>
<svg class="a" style="left:311px;top:170px" width="798" height="583" viewBox="311 170 798 583" fill="none">
<defs>
<linearGradient id="gw" x1="0" x2="1" y1="0" y2="0"><stop offset="0" stop-color="#a0a0a0"/><stop offset=".3" stop-color="#a8a8a8"/><stop offset="1" stop-color="#acacac"/></linearGradient>
<linearGradient id="gc" x1="0" x2="1" y1="0" y2="0"><stop offset="0" stop-color="#c0c0c0"/><stop offset=".88" stop-color="#c0c0c0"/><stop offset=".93" stop-color="#b4b4b4"/><stop offset="1" stop-color="#c6c6c6"/></linearGradient>
<linearGradient id="gcream" x1="0" x2="1" y1="0" y2="0"><stop offset="0" stop-color="#fffee4"/><stop offset=".6" stop-color="#fdfce1"/><stop offset="1" stop-color="#eeedd2"/></linearGradient>
<linearGradient id="gdoor" x1="0" x2="0" y1="0" y2="1"><stop offset="0" stop-color="#63634e"/><stop offset="1" stop-color="#85856d"/></linearGradient>
<linearGradient id="gshadow" x1="0" x2="0" y1="0" y2="1"><stop offset="0" stop-color="#000" stop-opacity=".26"/><stop offset=".5" stop-color="#000" stop-opacity=".08"/><stop offset="1" stop-color="#000" stop-opacity="0"/></linearGradient>
<linearGradient id="gseat" x1="0" x2="0" y1="0" y2="1"><stop offset="0" stop-color="#6f8895"/><stop offset="1" stop-color="#7e9aa8"/></linearGradient>
<pattern id="fab" width="3" height="3" patternUnits="userSpaceOnUse"><rect width="3" height="3" fill="#809caa"/><rect y="1" width="3" height="1" fill="#7d99a7"/></pattern>
</defs>
<!-- floor -->
<rect x="311" y="650" width="798" height="103" fill="#e3e3e3"/>
<!-- ceiling -->
<path d="M311 170 H1109 V210 H311 Z" fill="url(#gc)"/>
<!-- back wall -->
<path d="M311 203.4 L1027.6 200.4 L1020.4 658 L311 657.4 Z" fill="#ffffe5"/>
<!-- right wall -->
<path d="M1027.6 200.4 L1083 170 H1109 V702.7 L1020.4 658 Z" fill="url(#gw)"/>
<path d="M1027.6 200.4 L1083 170" stroke="#111" stroke-width=".9"/>
<path d="M1027.6 200.4 L1020.4 658" stroke="#141408" stroke-width="1.3"/>
<path d="M1020.4 658 L1109 702.7" stroke="#111" stroke-width=".9"/>
<!-- yellow lines -->
<path d="M311 203.4 L1027.6 200.4" stroke="#ffff00" stroke-width="1.3"/>
<path d="M311 657.4 L1020.4 658.2" stroke="#ffff00" stroke-width="1.4"/>
<!-- wall strip right of dialog darker (shadow) -->
<path d="M1015 203 H1027.4 L1021 602 H1015 Z" fill="#000" opacity=".03"/>
<!-- shadow under dialog on wall -->
<!-- door -->
<rect x="819" y="600" width="131.4" height="56.6" fill="url(#gdoor)"/>
<rect x="807.6" y="600" width="11.4" height="58" fill="#b4b4b4"/><rect x="950.4" y="600" width="14.4" height="58" fill="#b4b4b4"/>
<path d="M808 600 V657.6 M817.2 600 V657 M818.8 600 V657 M951 600 V657 M953.6 600 V657 M957.6 600 V657.4" stroke="#111" stroke-width="1.2"/>
<path d="M851 656.6 H933" stroke="#1a1a10" stroke-width="1.6"/>
<path d="M809.8 600 V658.4 H840" stroke="#ff0000" stroke-width="1.5"/>
<path d="M965 600 L965 650 L963.6 658.8 H933.6" stroke="#ff0000" stroke-width="1.5"/>
<!-- swing arc -->
<path d="M819.6 658.8 C850 676 905 694 960 700 C985 703 1005 704 1022 704 L950.4 659.2 Z" fill="#d4deed"/>
<path d="M819.6 658.8 C850 676 905 694 960 700 C985 703 1005 704 1022 704" stroke="#a9bfe0" stroke-width="1"/>
<path d="M950.4 659.2 L1022 704" stroke="#8aa6d4" stroke-width="1"/>
<path d="M950.4 659.2 L1022 704" stroke="#222" stroke-width="1.1" stroke-dasharray="1.2 4.2"/>
<ellipse cx="879.4" cy="651.6" rx="5.4" ry="4.4" stroke="#ff0000" stroke-width="1.8"/>
<path d="M879.4 651.4 L885.6 658.4 M877 659.2 H894.4" stroke="#1414ff" stroke-width="1.2"/>
<!-- red switch marks -->
<path d="M1015 482.4 H1027.2" stroke="#1414ff" stroke-width="1"/>
<path d="M1022.4 471.4 H1026.6 M1025.4 475 V477.4 M1022.4 480.4 H1026.8 M1017 481 H1019.6 M1017.4 484 H1018.8" stroke="#ff0000" stroke-width="1.6"/>
<!-- bubble -->
<path d="M1044.8 676.3 A22.5 22.5 0 1 0 1044.8 721.3 H1067.3 V698.8 A22.5 22.5 0 0 0 1044.8 676.3 Z" fill="#6ad9ff" stroke="#505050" stroke-width="1.6"/>
<path d="M1033.8 691.8 H1056.4 M1033.8 698.9 H1056.4 M1045.4 706 H1056.4" stroke="#505050" stroke-width="1.4"/>
<!-- SOFA -->
<g>
<path d="M311 543.4 H346.4 L349.2 518 Q349.8 513.6 354 513.6 H722 V713 H311 Z" fill="url(#fab)"/>
<!-- seat top surface darker -->
<path d="M311 627.4 L347 601 H661 V633.4 H311 Z" fill="#000" opacity=".07"/>
<rect x="311" y="543.4" width="34" height="29" fill="#fff" opacity=".04"/>
<path d="M646 601 H660.6 V631 Z" fill="#000" opacity=".14"/>
<path d="M311 572 H345 V576 L311 595 Z" fill="#000" opacity=".05"/>
<g stroke="#050505" stroke-linecap="round" stroke-linejoin="round">
<path d="M311 543.8 H346" stroke-width="2.2"/>
<path d="M311 545.6 H346" stroke-width="1" stroke="#3a4a55"/>
<path d="M311 572 H345" stroke-width="1.4"/>
<path d="M311 595 L345 576.4" stroke-width="2"/>
<path d="M344.8 600.4 L346.4 543 L349.2 518 Q349.8 513.8 354 513.6 L364 513 L400 514.6" stroke-width="1.6"/>
<path d="M344.6 600.6 H360 L400 600.4" stroke-width="1.6"/>
<path d="M311 627.4 L347.4 601.2" stroke-width="1.2"/>
<path d="M311 632.8 H478.4" stroke-width="1.7"/>
<path d="M486.8 633.4 H661" stroke-width="1.7"/>
<path d="M311 672.4 H360 L560 674 L676 674.6" stroke-width="3"/>
<path d="M661 671.6 C666 675 672 668.6 680 667.6 C685.6 667.4 686.4 673.4 681 675 L668 675" stroke-width="1.2"/>
<path d="M311 711.2 H352 L722 713" stroke-width="2.2"/>
<path d="M721.6 600 V710.6 Q721.6 712.8 719.4 712.9" stroke-width="2.4" fill="none"/>
<path d="M660.8 600 L661.4 672" stroke-width="1.8"/>
<path d="M496.6 601 L479.4 631.6 L478.6 633 L480.2 668 L476.4 672.4" stroke-width="1.5"/>
<path d="M501 601 L486.6 632.6 L485.4 668.6 L490 672.4" stroke-width="1.7"/>
<path d="M494.6 603 L482.4 629" stroke-width=".9" stroke-dasharray="1 1"/>
<!-- backrest stitches -->
<path d="M352.4 555.6 H375" stroke-width="1" stroke-dasharray="3.4 3.6"/>
<path d="M392.4 521 L391.4 552 M390.2 556 L389.4 572 L388 590" stroke-width="1.1" stroke-dasharray="7 2.4 2 2.4"/>
<path d="M399 557 H392.4 L390.6 560" stroke-width="1.1"/>
<rect x="388.6" y="568.6" width="2.4" height="3" fill="#050505" stroke="none"/>
<!-- tufts -->
<path d="M392 609.4 L383 616 L377.6 622 L368 625" stroke-width="1"/><path d="M367.6 625 L371.4 621.8 L371 625.2 Z" stroke-width="1" fill="#050505"/>
<path d="M386.4 612.2 L399 608.6 M376.4 622 L385.4 620.6" stroke-width="1" stroke-dasharray="3.6 1.8"/>
<path d="M435 610.6 L443.6 612.6 L447.6 610.4 L449.6 606.6 M443.6 612.6 L438.4 622.6 L434.4 626 L423 620.6 M432.4 625.2 L439.6 623.4" stroke-width="1"/>
<path d="M541.6 603 L541 622 M537.8 623.8 L546 620.4 L553 618.2 M543.6 609.6 L556 608" stroke-width="1"/>
<path d="M604.6 604 L605.6 624 M594.4 609 L610.6 608 M594.4 620.6 L610.6 623.4" stroke-width="1"/>
</g>
</g>
</svg>
<div class="a" style="left:1113.6px;top:166px;width:26px;height:617px;background:#e9e9e9"></div>
<div class="a" style="left:1113.6px;top:167px;width:1.6px;height:616px;background:#a9a9a9"></div>
<div class="a" style="left:1109px;top:168px;width:4.6px;height:585px;background:#f4f4f4"></div>
<div class="a" style="left:1118.2px;top:171px;width:21px;height:174.6px;border:1px solid #7d7d7d;border-right:none;border-radius:4px 0 0 4px;background:#f0f0f0;box-sizing:border-box"></div>
<span class="t" style="left:1134.06px;top:196.00px;font-size:12px;color:#565656;transform-origin:0 0;transform:rotate(90deg) scaleX(0.9463);">Ferramentas - Propriedades</span>
<svg class="a" style="left:1119px;top:173px" width="19" height="20" viewBox="1119 173 19 20" fill="none" stroke-linecap="round">
<path d="M1122 176 L1126.6 181" stroke="#d81e1e" stroke-width="2.6"/><path d="M1127 181.4 L1133.6 188.6" stroke="#6a7c9a" stroke-width="1.3"/>
<path d="M1133.4 176.4 C1131 175.4 1128.6 177.6 1130 180 L1122 188.4" stroke="#5a7ab8" stroke-width="1.4"/>
<path d="M1133.6 176.6 C1135.4 178 1134.4 181 1131.6 180.6" stroke="#5a7ab8" stroke-width="1.2"/>
<path d="M1128.4 187 C1129 189.6 1132.4 190.4 1134 188.6 M1134.6 184 C1136 184.6 1136 187 1134.6 188" stroke="#7a9ad8" stroke-width="1.1"/>
</svg>
<div class="a" style="left:311px;top:752.8px;width:802.6px;height:30px;background:linear-gradient(180deg,#ebebeb 0,#efefef 5px,#f8f8f8 7px,#f6f6f6 100%)"></div>
<div class="a" style="left:311px;top:756px;width:420px;height:26px;overflow:hidden"><span class="t" style="left:-31.00px;top:9.00px;font-size:12px;transform-origin:0 0;transform:scaleX(0.9607);color:#111;">Seleci</span><span class="t" style="left:0.80px;top:9.00px;font-size:12px;transform-origin:0 0;transform:scaleX(0.9825);color:#111;">onado: Interior 02 -&gt; Porta de Giro</span><span class="t" style="left:185.20px;top:9.00px;font-size:12px;transform-origin:0 0;transform:scaleX(0.9374);color:#111;">(875x2000x190) - (Normal: 0; 0; 1 Rotação: 0)</span></div>
<div class="a" style="left:1025.6px;top:768px;width:2px;height:2px;background:#9a9a9a"></div>
<div class="a" style="left:1022px;top:771.4px;width:2px;height:2px;background:#9a9a9a"></div>
<div class="a" style="left:1025.6px;top:771.4px;width:2px;height:2px;background:#9a9a9a"></div>
<div class="a" style="left:1018.4px;top:774.8px;width:2px;height:2px;background:#9a9a9a"></div>
<div class="a" style="left:1022px;top:774.8px;width:2px;height:2px;background:#9a9a9a"></div>
<div class="a" style="left:1025.6px;top:774.8px;width:2px;height:2px;background:#9a9a9a"></div>
<div class="a" style="left:1036px;top:759.4px;width:47.6px;height:20.4px;background:#fff;border:1px solid #0078d7;box-sizing:border-box"></div>
<svg class="a" style="left:1039px;top:761px" width="16" height="17" viewBox="0 0 16 17" fill="none">
<path d="M1.6 0.8 H8.4 L11.6 4 V12.6 H1.6 Z" fill="#fdfdff" stroke="#8aa0d0" stroke-width=".9"/><path d="M8.4 0.8 V4 H11.6" stroke="#8aa0d0" stroke-width=".9"/>
<path d="M3.6 10 L9 7.4 L14.4 10 V13.4 L9 16 L3.6 13.4 Z" fill="#c9c9c9" stroke="#7a7a7a" stroke-width=".8"/>
<path d="M5 12.4 L6.6 10.6 L8 12.4 L9.4 10.4" stroke="#3a5ab0" stroke-width="1"/><circle cx="12" cy="12" r="1.3" fill="#e0a030"/>
</svg>
<span class="t" style="left:1057.20px;top:764.00px;font-size:12px;transform-origin:0 0;transform:scaleX(0.8494);color:#111;">Sala</span>
<svg class="a" style="left:1095px;top:765px" width="11" height="10" viewBox="0 0 11 10"><path d="M1.8 1.6 L9.2 8 M9.2 1.6 L1.8 8" stroke="#8c8c8c" stroke-width="1.7"/></svg>
</div>
<div id="winb" class="a"></div>
<div class="a" style="left:399px;top:113.5px;width:616.2px;height:488.8px;border-radius:8px;background:#f0f0f0;box-shadow:0 0 0 .7px rgba(0,0,0,.30),0 0 20px rgba(0,0,0,.11),0 24px 42px -18px rgba(0,0,0,.40);overflow:hidden">
<div class="a" style="left:0;top:0;width:617px;height:30.4px;background:#f4f1f9"></div>
<div class="a" style="left:0;top:30.4px;width:617px;height:24.6px;background:linear-gradient(180deg,#fcfcfc,#f3f3f3)"></div>
<div class="a" style="left:134px;top:31.4px;width:320px;height:22.6px;background:#fff"></div>
<div class="a" style="left:0;top:55.6px;width:617px;height:20px;background:#efefef;border-bottom:1px solid #e6e6e6;box-sizing:border-box"></div>
<div class="a" style="left:0;top:55.6px;width:57.4px;height:20.4px;background:#f8f8f8;border-right:1px solid #dcdcdc;border-top:1px solid #e6e6e6;box-sizing:border-box"></div>
<div class="a" style="left:5.4px;top:78.6px;width:605.6px;height:383px;border:1px solid #e6e6e6;background:#fff;box-sizing:border-box"></div>
<div class="a" style="left:0;top:465.6px;width:617px;height:1px;background:#dcdcdc"></div>
<div class="a" style="left:0;top:466.6px;width:617px;height:1px;background:#fcfcfc"></div>
</div>
<span class="t" style="left:407.40px;top:123.00px;font-size:12px;transform-origin:0 0;transform:scaleX(0.9577);color:#111;">Localizar Rápido</span>
<span class="t" style="left:454.60px;top:151.00px;font-size:11.8px;transform-origin:0 0;transform:scaleX(0.9542);color:#111;">Pesquisar por:</span>
<span class="t" style="left:536.20px;top:151.00px;font-size:11.8px;transform-origin:0 0;transform:scaleX(1.0334);color:#111;">Incolor</span>
<span class="t" style="left:875.80px;top:151.00px;font-size:11.8px;transform-origin:0 0;transform:scaleX(0.9741);color:#111;">Localizar</span>
<span class="t" style="left:407.70px;top:173.00px;font-size:11.5px;transform-origin:0 0;transform:scaleX(0.8724);color:#111;">Materiais</span>
<span class="t" style="left:403.80px;top:586.00px;font-size:12px;transform-origin:0 0;transform:scaleX(0.9677);color:#111;">Foram encontrados 3 itens em 2s.</span>
<svg class="a" style="left:399px;top:113px" width="617" height="60" viewBox="399 113 617 60" fill="none">
<path d="M896 128.8 H906.2" stroke="#111" stroke-width="1.1"/>
<rect x="941.4" y="123.4" width="9.4" height="9.4" rx=".8" stroke="#111" stroke-width="1.1"/>
<path d="M986.6 123.2 L997.2 133.2 M997.2 123.2 L986.6 133.2" stroke="#111" stroke-width="1.1"/>
<!-- tree icons -->
<path d="M404.5 153 V164 M409.5 158 V163.4" stroke="#111" stroke-width="1.1" stroke-dasharray="1 1"/><rect x="405.6" y="155" width="1" height="1" fill="#111"/><rect x="410.6" y="160" width="1" height="1" fill="#111"/><rect x="402.4" y="148.4" width="4.6" height="4.4" fill="#dcdcdc"/><path d="M402.5 152.8 V148.5 H407" stroke="#6c90c0" stroke-width="1" fill="none"/><path d="M403.4 150.8 H406.6" stroke="#333" stroke-width="1"/><rect x="407.4" y="153.4" width="4.6" height="4.4" fill="#dcdcdc"/><path d="M407.5 157.8 V153.5 H412" stroke="#6c90c0" stroke-width="1" fill="none"/><path d="M408.4 155.8 H411.6" stroke="#333" stroke-width="1"/><rect x="412.4" y="158.4" width="4.6" height="4.4" fill="#dcdcdc"/><path d="M412.5 162.8 V158.5 H417" stroke="#6c90c0" stroke-width="1" fill="none"/><path d="M413.4 160.8 H416.6" stroke="#333" stroke-width="1"/><path d="M429.5 148 V163.4" stroke="#111" stroke-width="1.1" stroke-dasharray="1 1"/><rect x="431" y="150" width="1" height="1" fill="#111"/><rect x="431" y="155.2" width="1" height="1" fill="#111"/><rect x="431" y="160.4" width="1" height="1" fill="#111"/><rect x="432.4" y="148.4" width="4.6" height="4.4" fill="#dcdcdc"/><path d="M432.5 152.8 V148.5 H437" stroke="#6c90c0" stroke-width="1" fill="none"/><path d="M433.4 150.8 H436.6" stroke="#333" stroke-width="1"/><path d="M435 149.2 V152.4" stroke="#333" stroke-width="1"/><rect x="432.4" y="153.7" width="4.6" height="4.4" fill="#dcdcdc"/><path d="M432.5 158.1 V153.8 H437" stroke="#6c90c0" stroke-width="1" fill="none"/><path d="M433.4 156.1 H436.6" stroke="#333" stroke-width="1"/><path d="M435 154.5 V157.7" stroke="#333" stroke-width="1"/><rect x="432.4" y="159" width="4.6" height="4.4" fill="#dcdcdc"/><path d="M432.5 163.4 V159.1 H437" stroke="#6c90c0" stroke-width="1" fill="none"/><path d="M433.4 161.4 H436.6" stroke="#333" stroke-width="1"/><path d="M435 159.8 V163" stroke="#333" stroke-width="1"/>
<path d="M448.5 149 V163.8" stroke="#c2c2c2" stroke-width="1"/>
<!-- magnifier -->
<circle cx="862.6" cy="154.4" r="5.4" fill="#d6ecfa" stroke="#5a9ad8" stroke-width="1.6"/>
<path d="M859.6 152.4 A3.6 3.6 0 0 1 864 151" stroke="#fff" stroke-width="1.2"/>
<path d="M866.6 158.6 L871.4 163.4" stroke="#7a8aa8" stroke-width="2.4" stroke-linecap="round"/>
</svg>
<svg class="a" style="left:406px;top:194px" width="200" height="200" viewBox="406 194 200 200" fill="none">
<defs><linearGradient id="fold" x1="0" x2="1" y1="0" y2="1"><stop offset="0" stop-color="#f2e2a0"/><stop offset=".6" stop-color="#e6d07e"/><stop offset="1" stop-color="#d8bc60"/></linearGradient>
<linearGradient id="foldb" x1="0" x2="0" y1="0" y2="1"><stop offset="0" stop-color="#e4cc78"/><stop offset="1" stop-color="#cdb257"/></linearGradient></defs>
<g stroke="#3a3a3a" stroke-width="1" stroke-dasharray="1 1.4">
<path d="M425.5 215.6 V270"/><path d="M430.6 210.5 H445"/><path d="M430.6 274.5 H445"/>
<path d="M460.5 226 V242.4 H479"/><path d="M460.5 290 V338.6 H479 M460.5 306.4 H479"/>
</g>
<g>
<path d="M445.6 204 L447.6 198.4 L448.6 197.6 L455.6 196.2 L457.6 197.6 L468 194.6 L469.6 195.4 L470 197.4 L449 204 L449.8 221.8 L448.4 221.4 L445.6 217 Z" fill="url(#foldb)"/>
<path d="M449.4 203.6 L470.6 196.9 L471 198.2 L449.6 205.2 Z" fill="#fffbe6"/>
<path d="M449 204.8 L471.4 197.7 L471.6 214.2 L450 222 Z" fill="url(#fold)"/>
<path d="M450 222 L471.6 214.2" stroke="#c4a444" stroke-width=".8"/>
</g>
<g transform="translate(0 64)">
<path d="M445.6 204 L447.6 198.4 L448.6 197.6 L455.6 196.2 L457.6 197.6 L468 194.6 L469.6 195.4 L470 197.4 L449 204 L449.8 221.8 L448.4 221.4 L445.6 217 Z" fill="url(#foldb)"/>
<path d="M449.4 203.6 L470.6 196.9 L471 198.2 L449.6 205.2 Z" fill="#fffbe6"/>
<path d="M449 204.8 L471.4 197.7 L471.6 214.2 L450 222 Z" fill="url(#fold)"/>
<path d="M450 222 L471.6 214.2" stroke="#c4a444" stroke-width=".8"/>
</g>
<g><rect x="421.4" y="206.4" width="8.4" height="8.4" rx="1.2" fill="#fff" stroke="#8f8f8f" stroke-width="1"/><path d="M423.4 210.6 H427.8" stroke="#2c4d9a" stroke-width="1.2"/></g>
<g><rect x="421.4" y="270.4" width="8.4" height="8.4" rx="1.2" fill="#fff" stroke="#8f8f8f" stroke-width="1"/><path d="M423.4 274.6 H427.8" stroke="#2c4d9a" stroke-width="1.2"/></g>
<rect x="479" y="226" width="31.6" height="31.6" fill="#fafafa" stroke="#efefef" stroke-width="1"/>
<rect x="479" y="290" width="31.6" height="31.6" fill="#fafafa" stroke="#efefef" stroke-width="1"/>
<rect x="479" y="321.8" width="31.6" height="31.6" fill="#fafafa" stroke="#efefef" stroke-width="1"/>
<rect x="514.2" y="322.2" width="35.8" height="31.6" fill="#0078d7"/>
<rect x="514.6" y="322.6" width="35" height="30.8" stroke="#1a1a1a" stroke-width="1" stroke-dasharray="1 1"/>
<rect x="514.6" y="322.6" width="35" height="30.8" stroke="#ff9a28" stroke-width="1" stroke-dasharray="1 1" stroke-dashoffset="1"/>
</svg>
<span class="t" style="left:481.00px;top:205.00px;font-size:11.5px;transform-origin:0 0;transform:scaleX(0.9206);color:#111;">Acrílicos</span>
<span class="t" style="left:516.40px;top:237.00px;font-size:11.5px;transform-origin:0 0;transform:scaleX(0.9097);color:#111;">Incolor</span>
<span class="t" style="left:481.40px;top:269.00px;font-size:11.5px;transform-origin:0 0;transform:scaleX(0.9114);color:#111;">Vidros\Lisos</span>
<span class="t" style="left:516.40px;top:301.00px;font-size:11.5px;transform-origin:0 0;transform:scaleX(0.9097);color:#111;">Incolor</span>
<span class="t" style="left:516.40px;top:333.00px;font-size:11.5px;transform-origin:0 0;transform:scaleX(0.9097);color:#fff;">Incolor</span>
<div class="a" style="left:530.4px;top:371px;width:44.2px;height:17.8px;background:#f9f9f9;border:1px solid #cfcfcf;border-radius:3.5px;box-sizing:border-box;box-shadow:2px 2.4px 1.5px rgba(0,0,0,.42)"></div>
<span class="t" style="left:536.60px;top:375.00px;font-size:11.5px;transform-origin:0 0;transform:scaleX(0.9097);color:#575757;">Incolor</span>
<div class="a" style="left:1008.2px;top:590px;width:2px;height:2px;background:#a8a8a8"></div>
<div class="a" style="left:1004.8px;top:593.4px;width:2px;height:2px;background:#a8a8a8"></div>
<div class="a" style="left:1008.2px;top:593.4px;width:2px;height:2px;background:#a8a8a8"></div>
<div class="a" style="left:1001.4px;top:596.8px;width:2px;height:2px;background:#a8a8a8"></div>
<div class="a" style="left:1004.8px;top:596.8px;width:2px;height:2px;background:#a8a8a8"></div>
<div class="a" style="left:1008.2px;top:596.8px;width:2px;height:2px;background:#a8a8a8"></div>
<svg class="a" style="left:0;top:160px" width="560" height="130" viewBox="0 160 560 130">
<path d="M432.6 210.6 Q432.2 207.6 436 207.8 Q437.6 208 439 209.6 L471.8 246.4 L471 234.6 Q471.2 230 474.6 230 Q477.6 230 477.9 234 L480.4 250 L485.8 265.8 L478 263.2 L465 257.8 L453 257.4 Q449.8 256.8 450.1 254.4 Q450.5 251.9 453.4 251.9 L464.4 252 L433.6 214.4 Q432.4 212.6 432.6 210.6 Z" fill="#fc0006" stroke="#fc0006" stroke-width=".8" stroke-linejoin="round"/>
<path d="M432.6 210.6 Q432.2 207.6 436 207.8 Q437.6 208 439 209.6 L471.8 246.4 L471 234.6 Q471.2 230 474.6 230 Q477.6 230 477.9 234 L480.4 250 L485.8 265.8 L478 263.2 L465 257.8 L453 257.4 Q449.8 256.8 450.1 254.4 Q450.5 251.9 453.4 251.9 L464.4 252 L433.6 214.4 Q432.4 212.6 432.6 210.6 Z" fill="#fc0006" stroke="#fc0006" stroke-width=".8" stroke-linejoin="round" transform="translate(-430.6 -30.3)"/>
</svg>
</body>
</html>
